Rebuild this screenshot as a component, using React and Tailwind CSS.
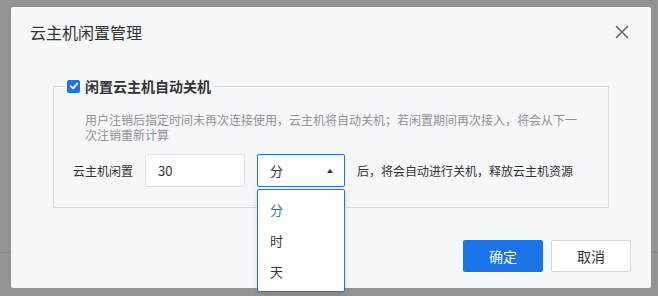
import React from "react";

const FONT = { fontFamily: '"Noto Sans CJK SC", "Noto Sans", sans-serif' };

const options = ["分", "时", "天"];

export default function App() {
  return (
    <div style={FONT} className="relative w-[658px] h-[296px] overflow-hidden bg-[#939393]">
      {/* page behind the overlay */}
      <div className="h-[253px] border-b border-[#8a8a8a]" />

      {/* dialog */}
      <div className="absolute left-[11px] top-[7px] w-[640px] h-[281px] bg-[#f6f7f9] rounded-[2px] flex flex-col">
        <div className="flex items-center justify-between h-[48px] pl-[19px] pr-[22px] pt-[1px]">
          <h2 className="text-[16px] text-[#333] leading-none">云主机闲置管理</h2>
          <svg width="14" height="14" viewBox="0 0 14 14" className="text-[#666]">
            <path d="M1.5 1.5 L12.5 12.5 M12.5 1.5 L1.5 12.5" stroke="currentColor" strokeWidth="1.5" strokeLinecap="round" fill="none" />
          </svg>
        </div>

        <div className="pt-[22px] px-[42px]">
          <fieldset className="border border-[#d6d9de] rounded-[1px] pl-[31px] pr-[10px] pb-[20px] min-w-0">
            <legend className="-ml-[20px] px-[2px] flex items-center gap-[5px]">
              <span className="w-[13px] h-[13px] rounded-[2px] bg-[#1a73e8] flex items-center justify-center">
                <svg width="10" height="10" viewBox="0 0 10 10">
                  <path d="M1.8 5.2 L4.1 7.4 L8.3 2.6" stroke="#fff" strokeWidth="1.8" fill="none" strokeLinecap="round" strokeLinejoin="round" />
                </svg>
              </span>
              <span className="text-[14px] font-bold text-[#333] leading-[18px]">闲置云主机自动关机</span>
            </legend>

            <p className="mt-[17px] max-w-[500px] text-[12px] leading-[15px] text-[#909399]">
              用户注销后指定时间未再次连接使用，云主机将自动关机；若闲置期间再次接入，将会从下一次注销重新计算
            </p>

            <div className="mt-[12px] -ml-[12px] flex items-center text-[12px] text-[#333]">
              <span className="w-[72px]">云主机闲置</span>
              <div className="w-[100px] h-[33px] bg-white border border-[#dcdfe4] rounded-[2px] flex items-center pl-[12px] text-[13px]">
                30
              </div>
              <div className="relative ml-[12px]">
                <div className="w-[88px] h-[33px] bg-white border border-[#1a73e8] rounded-[2px] flex items-center justify-between pl-[12px] pr-[11px] text-[13px]">
                  <span>分</span>
                  <span className="w-0 h-0 border-l-[3.5px] border-r-[3.5px] border-b-[4px] border-l-transparent border-r-transparent border-b-[#333]" />
                </div>
                <ul className="absolute left-0 top-[35px] w-[88px] bg-white border border-[#1a73e8] rounded-[2px] py-[4px] shadow-[0_2px_6px_rgba(0,0,0,0.12)] z-10">
                  {options.map((o, i) => (
                    <li
                      key={o}
                      className={`h-[31px] flex items-center pl-[12px] text-[13px] ${i === 0 ? "text-[#1a73e8]" : "text-[#333]"}`}
                    >
                      {o}
                    </li>
                  ))}
                </ul>
              </div>
              <span className="ml-[12px]">后，将会自动进行关机，释放云主机资源</span>
            </div>
          </fieldset>
        </div>

        <div className="mt-auto flex justify-end gap-[8px] pr-[20px] pb-[16px]">
          <button className="w-[80px] h-[32px] rounded-[2px] bg-[#1a73e8] text-white text-[14px]">确定</button>
          <button className="w-[80px] h-[32px] rounded-[2px] bg-white border border-[#d3d6db] text-[#333] text-[14px]">取消</button>
        </div>
      </div>
    </div>
  );
}
